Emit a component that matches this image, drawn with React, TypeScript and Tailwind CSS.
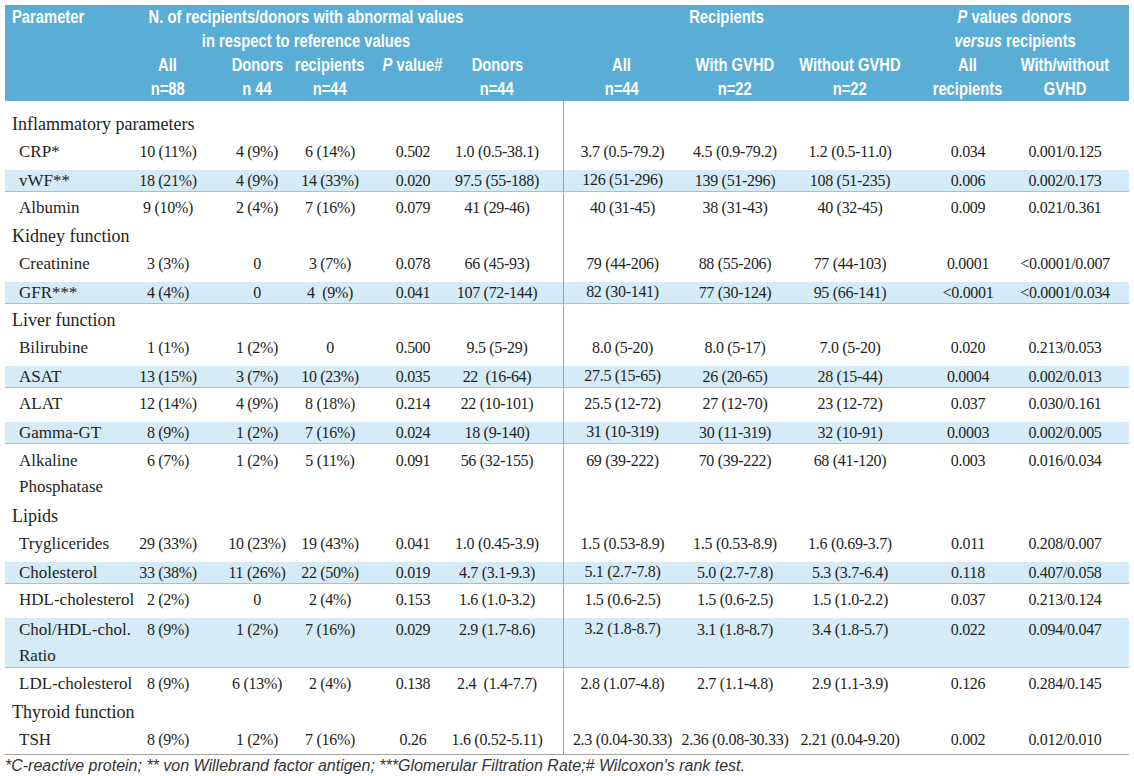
type Row = {
  name: string;
  vals?: string[];
  stripe?: boolean;
  tall?: boolean;
  section?: boolean;
};

const COLS = [
  'w-[84px]',
  'w-[94px]',
  'w-[52px]',
  'w-[114px]',
  'w-[54px] mr-[39px]',
  'w-[118px] border-l border-[#a3a3a3]',
  'w-[108px]',
  'w-[122px]',
  'w-[114px]',
  'w-[80px]',
];

const rows: Row[] = [
  { name: 'Inflammatory parameters', section: true },
  { name: 'CRP*', vals: ['10 (11%)', '4 (9%)', '6 (14%)', '0.502', '1.0 (0.5-38.1)', '3.7 (0.5-79.2)', '4.5 (0.9-79.2)', '1.2 (0.5-11.0)', '0.034', '0.001/0.125'] },
  { name: 'vWF**', stripe: true, vals: ['18 (21%)', '4 (9%)', '14 (33%)', '0.020', '97.5 (55-188)', '126 (51-296)', '139 (51-296)', '108 (51-235)', '0.006', '0.002/0.173'] },
  { name: 'Albumin', vals: ['9 (10%)', '2 (4%)', '7 (16%)', '0.079', '41 (29-46)', '40 (31-45)', '38 (31-43)', '40 (32-45)', '0.009', '0.021/0.361'] },
  { name: 'Kidney function', section: true },
  { name: 'Creatinine', vals: ['3 (3%)', '0', '3 (7%)', '0.078', '66 (45-93)', '79 (44-206)', '88 (55-206)', '77 (44-103)', '0.0001', '<0.0001/0.007'] },
  { name: 'GFR***', stripe: true, vals: ['4 (4%)', '0', '4  (9%)', '0.041', '107 (72-144)', '82 (30-141)', '77 (30-124)', '95 (66-141)', '<0.0001', '<0.0001/0.034'] },
  { name: 'Liver function', section: true },
  { name: 'Bilirubine', vals: ['1 (1%)', '1 (2%)', '0', '0.500', '9.5 (5-29)', '8.0 (5-20)', '8.0 (5-17)', '7.0 (5-20)', '0.020', '0.213/0.053'] },
  { name: 'ASAT', stripe: true, vals: ['13 (15%)', '3 (7%)', '10 (23%)', '0.035', '22  (16-64)', '27.5 (15-65)', '26 (20-65)', '28 (15-44)', '0.0004', '0.002/0.013'] },
  { name: 'ALAT', vals: ['12 (14%)', '4 (9%)', '8 (18%)', '0.214', '22 (10-101)', '25.5 (12-72)', '27 (12-70)', '23 (12-72)', '0.037', '0.030/0.161'] },
  { name: 'Gamma-GT', stripe: true, vals: ['8 (9%)', '1 (2%)', '7 (16%)', '0.024', '18 (9-140)', '31 (10-319)', '30 (11-319)', '32 (10-91)', '0.0003', '0.002/0.005'] },
  { name: 'Alkaline\nPhosphatase', tall: true, vals: ['6 (7%)', '1 (2%)', '5 (11%)', '0.091', '56 (32-155)', '69 (39-222)', '70 (39-222)', '68 (41-120)', '0.003', '0.016/0.034'] },
  { name: 'Lipids', section: true },
  { name: 'Tryglicerides', vals: ['29 (33%)', '10 (23%)', '19 (43%)', '0.041', '1.0 (0.45-3.9)', '1.5 (0.53-8.9)', '1.5 (0.53-8.9)', '1.6 (0.69-3.7)', '0.011', '0.208/0.007'] },
  { name: 'Cholesterol', stripe: true, vals: ['33 (38%)', '11 (26%)', '22 (50%)', '0.019', '4.7 (3.1-9.3)', '5.1 (2.7-7.8)', '5.0 (2.7-7.8)', '5.3 (3.7-6.4)', '0.118', '0.407/0.058'] },
  { name: 'HDL-cholesterol', vals: ['2 (2%)', '0', '2 (4%)', '0.153', '1.6 (1.0-3.2)', '1.5 (0.6-2.5)', '1.5 (0.6-2.5)', '1.5 (1.0-2.2)', '0.037', '0.213/0.124'] },
  { name: 'Chol/HDL-chol.\nRatio', stripe: true, tall: true, vals: ['8 (9%)', '1 (2%)', '7 (16%)', '0.029', '2.9 (1.7-8.6)', '3.2 (1.8-8.7)', '3.1 (1.8-8.7)', '3.4 (1.8-5.7)', '0.022', '0.094/0.047'] },
  { name: 'LDL-cholesterol', vals: ['8 (9%)', '6 (13%)', '2 (4%)', '0.138', '2.4  (1.4-7.7)', '2.8 (1.07-4.8)', '2.7 (1.1-4.8)', '2.9 (1.1-3.9)', '0.126', '0.284/0.145'] },
  { name: 'Thyroid function', section: true },
  { name: 'TSH', vals: ['8 (9%)', '1 (2%)', '7 (16%)', '0.26', '1.6 (0.52-5.11)', '2.3 (0.04-30.33)', '2.36 (0.08-30.33)', '2.21 (0.04-9.20)', '0.002', '0.012/0.010'] },
];

// header type is a condensed bold sans; no narrow face is installed, so squeeze Liberation Sans
const S = ({ children, left }: { children: React.ReactNode; left?: boolean }) => (
  <span
    className={`inline-block whitespace-nowrap [transform:scaleX(0.82)] ${
      left ? '[transform-origin:left_center]' : '[transform-origin:center]'
    }`}
  >
    {children}
  </span>
);

const HCell = ({ w, a, b }: { w: string; a: React.ReactNode; b?: React.ReactNode }) => (
  <div className={`${w} flex flex-col items-center whitespace-nowrap`}>
    <S>{a}</S>
    <S>{b ?? '\u00a0'}</S>
  </div>
);

const DataRow = ({ row }: { row: Row }) => {
  const h = row.tall ? 'h-[56px]' : 'h-[28px]';
  return (
    <div className={`${h} flex ${row.stripe ? 'pt-[4px] pb-[2px]' : ''}`}>
      <div className={`flex flex-1 ${row.stripe ? 'bg-[#d5ebf7] border-b border-[#8fc8e5]' : ''}`}>
        <div
          className={`w-[121px] flex items-center whitespace-pre ${
            row.section ? 'pl-[7px] text-[18px]' : 'pl-[14px] text-[17px]'
          } ${row.tall ? 'leading-[26px]' : ''}`}
        >
          {row.name}
        </div>
        {COLS.map((c, i) => (
          <div
            key={i}
            className={`${c} flex items-center justify-center whitespace-pre text-[16px] tracking-[-0.3px] ${
              row.tall ? 'leading-[26px]' : ''
            } ${i === 5 && row.stripe ? '-mt-[4px] -mb-[2px]' : ''}`}
          >
            {row.vals ? (row.tall ? `${row.vals[i]}\n\u00a0` : row.vals[i]) : ''}
          </div>
        ))}
      </div>
    </div>
  );
};

export default function App() {
  return (
    <div className="w-[1134px] h-[776px] overflow-hidden bg-white pt-[5px] px-[5px] text-[#231f20]">
      <div className="w-[1124px]">
        {/* header */}
        <div className="flex h-[96px] bg-[#5aadd5] text-white font-bold text-[18px] leading-[24px] font-['Liberation_Sans',sans-serif]">
          <div className="w-[121px] pl-[7px]">
            <S left>Parameter</S>
          </div>
          <div className="w-[344px] flex flex-col">
            <div className="h-[48px] pl-[16px] flex flex-col items-center">
              <S>N. of recipients/donors with abnormal values</S>
              <S>in respect to reference values</S>
            </div>
            <div className="flex">
              <HCell w="w-[84px]" a="All" b="n=88" />
              <HCell w="w-[94px]" a="Donors" b="n 44" />
              <HCell w="w-[52px]" a="recipients" b="n=44" />
              <HCell w="w-[114px]" a={<><i>P</i> value#</>} />
            </div>
          </div>
          <div className="w-[93px] pr-[39px] flex flex-col justify-end">
            <HCell w="w-[54px]" a="Donors" b="n=44" />
          </div>
          <div className="w-[348px] flex flex-col">
            <div className="h-[48px] pr-[20px] flex justify-center">
              <S>Recipients</S>
            </div>
            <div className="flex">
              <HCell w="w-[118px]" a="All" b="n=44" />
              <HCell w="w-[108px]" a="With GVHD" b="n=22" />
              <HCell w="w-[122px]" a="Without GVHD" b="n=22" />
            </div>
          </div>
          <div className="w-[194px] flex flex-col">
            <div className="h-[48px] pl-[14px] flex flex-col items-center">
              <S><i>P</i> values donors</S>
              <S><i>versus</i> recipients</S>
            </div>
            <div className="flex">
              <HCell w="w-[114px]" a="All" b="recipients" />
              <HCell w="w-[80px]" a="With/without" b="GVHD" />
            </div>
          </div>
        </div>

        {/* body */}
        <div className="font-['Liberation_Serif',serif]">
          <div className="h-[9px] flex">
            <div className="w-[121px]" />
            {COLS.map((c, i) => (
              <div key={i} className={c} />
            ))}
          </div>
          {rows.map((r) => (
            <DataRow key={r.name} row={r} />
          ))}
        </div>

        {/* footnote */}
        <div className="border-t border-[#a3a3a3] pt-[2px] italic text-[16px] leading-[18px] text-[#333] font-['Liberation_Sans',sans-serif]">
          *C-reactive protein; ** von Willebrand factor antigen; ***Glomerular Filtration Rate;# Wilcoxon's rank test.
        </div>
      </div>
    </div>
  );
}
